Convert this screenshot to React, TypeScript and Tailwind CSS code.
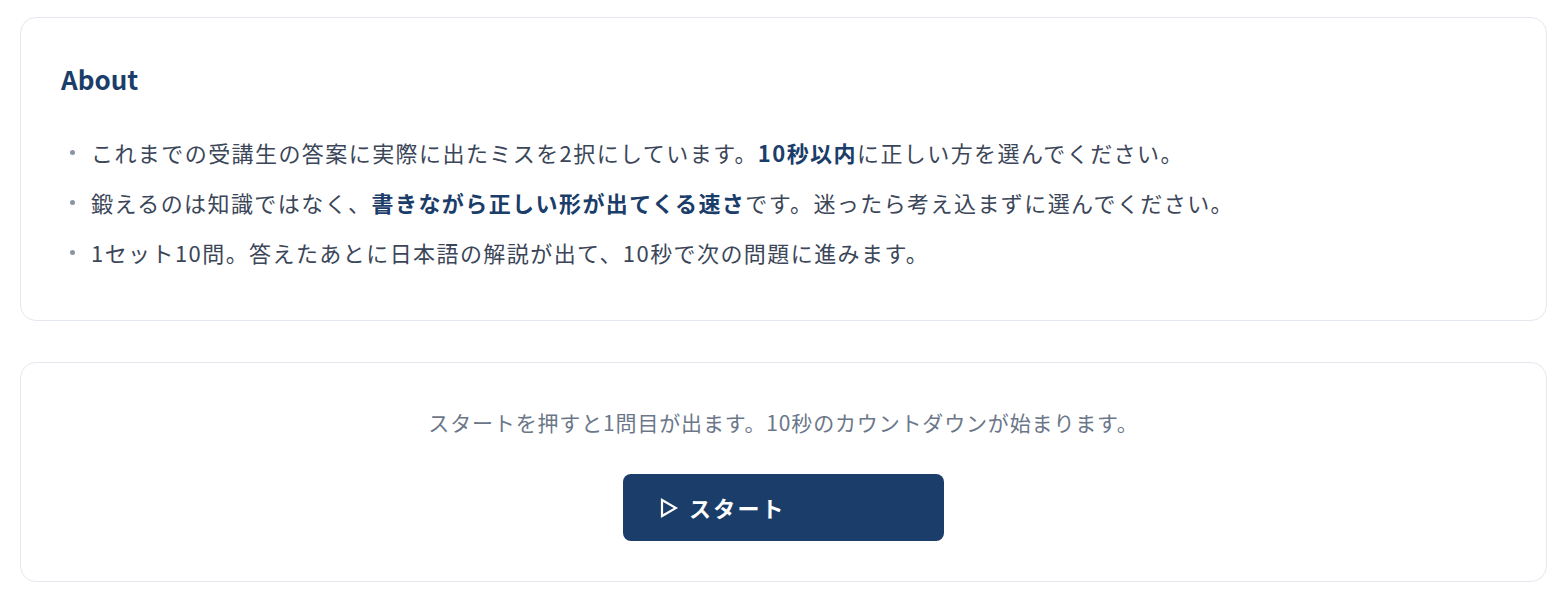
import React from 'react';

const NAVY = 'text-[#1b3d6a]';

const Bullet: React.FC<{ children: React.ReactNode }> = ({ children }) => (
  <li className="flex items-center leading-[50px]">
    <span className="ml-[9px] mr-[16px] h-[5px] w-[5px] shrink-0 rounded-full bg-[#8a94a3]" />
    <span>{children}</span>
  </li>
);

const PlayIcon: React.FC = () => (
  <svg width="18" height="20" viewBox="0 0 18 20" fill="none" aria-hidden="true">
    <path d="M2 2 L16 10 L2 18 Z" stroke="white" strokeWidth="2.2" strokeLinejoin="miter" />
  </svg>
);

const App: React.FC = () => {
  return (
    <div
      className="min-h-screen bg-white px-5 pt-[17px]"
      style={{ fontFamily: '"Noto Sans CJK JP", "Noto Sans", sans-serif' }}
    >
      <div className="flex flex-col gap-[41px]">
        <section className="rounded-2xl border border-[#e3e8ef] bg-white px-10 pt-[39px] pb-[43px]">
          <h2 className={`text-[26px] font-bold leading-[44px] ${NAVY}`}>About</h2>
          <ul className="mt-[26px] text-[22px] tracking-[0.065em] text-[#3b4658]">
            <Bullet>
              これまでの受講生の答案に実際に出たミスを2択にしています。
              <strong className={`font-bold ${NAVY}`}>10秒以内</strong>
              に正しい方を選んでください。
            </Bullet>
            <Bullet>
              鍛えるのは知識ではなく、
              <strong className={`font-bold ${NAVY}`}>書きながら正しい形が出てくる速さ</strong>
              です。迷ったら考え込まずに選んでください。
            </Bullet>
            <Bullet>1セット10問。答えたあとに日本語の解説が出て、10秒で次の問題に進みます。</Bullet>
          </ul>
        </section>

        <section className="flex flex-col items-center rounded-2xl border border-[#e3e8ef] bg-white px-10 pt-[39px] pb-10">
          <p className="text-[21px] leading-[40px] tracking-[0.04em] text-[#6b7789]">
            スタートを押すと1問目が出ます。10秒のカウントダウンが始まります。
          </p>
          <button className="mt-[32px] flex h-[67px] w-[321px] items-center gap-[11px] rounded-lg bg-[#1b3d6a] px-[37px] text-[22px] font-bold tracking-[0.1em] text-white">
            <PlayIcon />
            スタート
          </button>
        </section>
      </div>
    </div>
  );
};

export default App;
